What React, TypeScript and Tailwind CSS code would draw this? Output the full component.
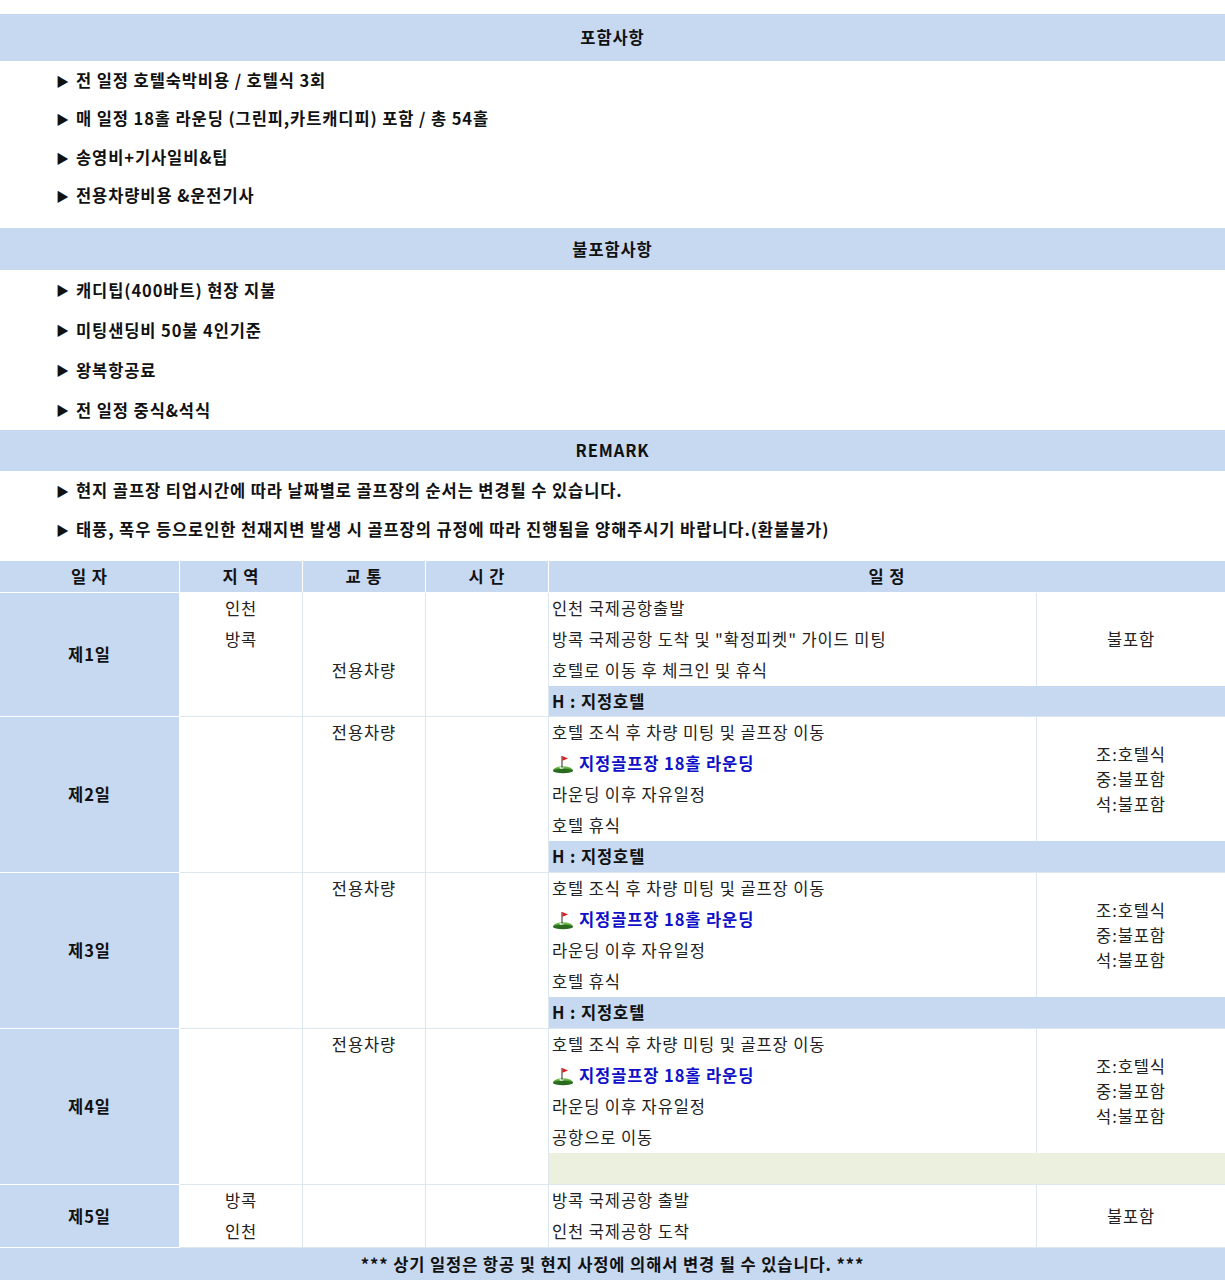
import React from "react";

const BLUE = "bg-[#c6d9f1]";

function SectionHeader({ title, h }: { title: string; h: string }) {
  return (
    <div className={`${BLUE} ${h} flex items-center justify-center text-[16.5px] font-bold text-[#111]`}>
      {title}
    </div>
  );
}

function Bullets({ items, rowH, pb }: { items: string[]; rowH: string; pb: string }) {
  return (
    <div className={`${pb} pl-[56px]`}>
      {items.map((t, i) => (
        <div key={i} className={`${rowH} flex items-center text-[16.5px] font-bold text-[#111]`}>
          <span className="mr-[7px] text-[13px] tracking-normal">▶</span>
          <span>{t}</span>
        </div>
      ))}
    </div>
  );
}

function GolfIcon() {
  return (
    <svg width="22" height="20" viewBox="0 0 22 20" className="mr-[5px] shrink-0">
      <defs>
        <linearGradient id="gm" x1="0" y1="0" x2="0" y2="1">
          <stop offset="0" stopColor="#7fd35a" />
          <stop offset="1" stopColor="#2a7a1e" />
        </linearGradient>
      </defs>
      <path d="M1 17 C1 10.5 21 10.5 21 17 Z" fill="url(#gm)" />
      <ellipse cx="11" cy="17" rx="10" ry="2.2" fill="#2b6a1f" />
      <ellipse cx="9.5" cy="13.8" rx="2.2" ry="0.9" fill="#ffffff" />
      <line x1="10" y1="2" x2="10" y2="13.8" stroke="#3a3a3a" strokeWidth="1.1" />
      <path d="M10.4 2 L16 4.4 L10.4 6.8 Z" fill="#e31b1b" />
    </svg>
  );
}

type Line = React.ReactNode;

function Lines({ lines, center }: { lines: Line[]; center?: boolean }) {
  return (
    <>
      {lines.map((l, i) => (
        <div
          key={i}
          className={`h-[31px] flex items-center text-[16.5px] text-[#222] ${center ? "justify-center" : "pl-[3px]"}`}
        >
          {l}
        </div>
      ))}
    </>
  );
}

const Golf = (
  <span className="flex items-center font-bold text-[#1010c8]">
    <GolfIcon />
    지정골프장 18홀 라운딩
  </span>
);

function DayBlock({
  day,
  region,
  transport,
  content,
  meals,
  bottom,
  firstBlock,
}: {
  day: string;
  region: Line[];
  transport: Line[];
  content: Line[];
  meals: string[];
  bottom: "hotel" | "green" | null;
  firstBlock?: boolean;
}) {
  return (
    <div className="flex">
      <div
        className={`w-[180px] shrink-0 ${BLUE} flex items-center justify-center text-[16.5px] font-bold text-[#111] border-b border-r border-white`}
      >
        {day}
      </div>
      <div className="w-[123px] shrink-0 flex flex-col border-r border-b border-[#dde7f2]">
        <Lines lines={region} center />
      </div>
      <div className="w-[123px] shrink-0 flex flex-col border-r border-b border-[#dde7f2]">
        <Lines lines={transport} center />
      </div>
      <div className="w-[123px] shrink-0 flex flex-col border-r border-b border-[#dde7f2]" />
      <div className="flex-1 flex flex-col border-b border-[#dde7f2]">
        <div className="flex">
          <div className="w-[488px] shrink-0 flex flex-col border-r border-[#dde7f2]">
            <Lines lines={content} />
          </div>
          <div className="flex-1 flex flex-col items-center justify-center text-[16.5px] leading-[25px] text-[#222]">
            {meals.map((m, i) => (
              <div key={i}>{m}</div>
            ))}
          </div>
        </div>
        {bottom === "hotel" && (
          <div
            className={`${BLUE} ${firstBlock ? "h-[30px]" : "h-[31px]"} flex items-center pl-[3px] text-[16.5px] font-bold text-[#111]`}
          >
            H : 지정호텔
          </div>
        )}
        {bottom === "green" && <div className="bg-[#ebf1de] h-[31px]" />}
      </div>
    </div>
  );
}

export default function App() {
  const headCell = "h-[31px] flex items-center justify-center font-bold text-[16.5px] text-[#111] border-r border-white";
  return (
    <div className="w-[1225px] bg-white font-['Noto_Sans_CJK_KR','Noto_Sans',sans-serif] tracking-[0.9px] pt-[14px]">
      <SectionHeader title="포함사항" h="h-[47px]" />
      <Bullets
        items={[
          "전 일정 호텔숙박비용 / 호텔식 3회",
          "매 일정 18홀 라운딩 (그린피,카트캐디피) 포함 / 총 54홀",
          "송영비+기사일비&팁",
          "전용차량비용 &운전기사",
        ]}
        rowH="h-[38.5px]"
        pb="pb-[13px]"
      />
      <SectionHeader title="불포함사항" h="h-[42px]" />
      <Bullets
        items={["캐디팁(400바트) 현장 지불", "미팅샌딩비 50불 4인기준", "왕복항공료", "전 일정 중식&석식"]}
        rowH="h-[40px]"
        pb="pb-0"
      />
      <SectionHeader title="REMARK" h="h-[41px]" />
      <Bullets
        items={[
          "현지 골프장 티업시간에 따라 날짜별로 골프장의 순서는 변경될 수 있습니다.",
          "태풍, 폭우 등으로인한 천재지변 발생 시 골프장의 규정에 따라 진행됨을 양해주시기 바랍니다.(환불불가)",
        ]}
        rowH="h-[39px]"
        pb="pb-[12px]"
      />
      <div className={`flex ${BLUE} border-b border-white`}>
        <div className={`w-[180px] ${headCell}`}>일 자</div>
        <div className={`w-[123px] ${headCell}`}>지 역</div>
        <div className={`w-[123px] ${headCell}`}>교 통</div>
        <div className={`w-[123px] ${headCell}`}>시 간</div>
        <div className="flex-1 h-[31px] flex items-center justify-center font-bold text-[16.5px] text-[#111]">일 정</div>
      </div>
      <DayBlock
        firstBlock
        day="제1일"
        region={["인천", "방콕"]}
        transport={["", "", "전용차량"]}
        content={["인천 국제공항출발", '방콕 국제공항 도착 및 "확정피켓" 가이드 미팅', "호텔로 이동 후 체크인 및 휴식"]}
        meals={["불포함"]}
        bottom="hotel"
      />
      <DayBlock
        day="제2일"
        region={[]}
        transport={["전용차량"]}
        content={["호텔 조식 후 차량 미팅 및 골프장 이동", Golf, "라운딩 이후 자유일정", "호텔 휴식"]}
        meals={["조:호텔식", "중:불포함", "석:불포함"]}
        bottom="hotel"
      />
      <DayBlock
        day="제3일"
        region={[]}
        transport={["전용차량"]}
        content={["호텔 조식 후 차량 미팅 및 골프장 이동", Golf, "라운딩 이후 자유일정", "호텔 휴식"]}
        meals={["조:호텔식", "중:불포함", "석:불포함"]}
        bottom="hotel"
      />
      <DayBlock
        day="제4일"
        region={[]}
        transport={["전용차량"]}
        content={["호텔 조식 후 차량 미팅 및 골프장 이동", Golf, "라운딩 이후 자유일정", "공항으로 이동"]}
        meals={["조:호텔식", "중:불포함", "석:불포함"]}
        bottom="green"
      />
      <DayBlock
        day="제5일"
        region={["방콕", "인천"]}
        transport={[]}
        content={["방콕 국제공항 출발", "인천 국제공항 도착"]}
        meals={["불포함"]}
        bottom={null}
      />
      <div className={`${BLUE} h-[32px] flex items-center justify-center font-bold text-[16.5px] text-[#111]`}>
        *** 상기 일정은 항공 및 현지 사정에 의해서 변경 될 수 있습니다. ***
      </div>
    </div>
  );
}
